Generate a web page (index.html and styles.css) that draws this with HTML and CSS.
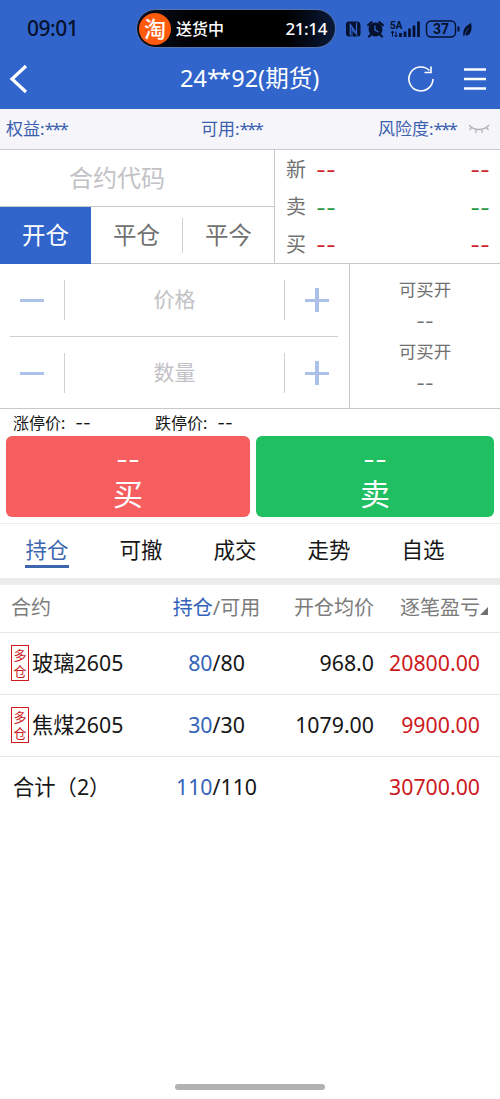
FILE: index.html
```html
<!DOCTYPE html>
<html lang="zh-CN">
<head>
    <meta charset="UTF-8">
    <meta name="viewport" content="width=device-width, initial-scale=1.0">
    <title>期货交易</title>
    <link rel="stylesheet" href="styles.css">
</head>
<body>
    <header class="top">
        <div class="status-bar">
            <span class="clock">09:01</span>
            <div class="island">
                <span class="island-logo">淘</span>
                <span class="island-text">送货中</span>
                <span class="island-time">21:14</span>
            </div>
            <svg class="status-icons" width="130" height="24" viewBox="0 0 130 24">
                <!-- nfc -->
                <path d="M4 4.500h7.500q4 0 4 4v7.500q0 3.500-2.500 3.500L6.500 8v11.500H4q-3 0-3-3V7.500q0-3 3-3z" fill="#06112e"/>
                <path d="M5.300 18.500V7.500l6.200 9V5.500" fill="none" stroke="#3165cc" stroke-width="1.300"/>
                <path d="M7.500 13.500l5 6h-5z" fill="#06112e"/>
                <!-- alarm -->
                <circle cx="30.500" cy="12.500" r="6.900" fill="#06112e"/>
                <path d="M23.200 8.200l3.500-3M37.800 8.200l-3.500-3M26 17.500l-2 2M35 17.500l2 2" stroke="#06112e" stroke-width="2.200" stroke-linecap="round"/>
                <path d="M30 8.500v4.500l3.500 2" fill="none" stroke="#3165cc" stroke-width="1.300"/>
                <!-- signal -->
                <text x="45" y="11.500" class="net-text">5A</text>
                <path d="M47.500 19.500v-5M46 16l1.500-2 1.500 2M51 14.500v5M49.500 18l1.500 2 1.500-2" fill="none" stroke="#06112e" stroke-width="1"/>
                <path d="M55.500 20v-4M60 20v-5.500M64.500 20v-8.500M69 20v-11.500M73.500 20v-15.500" stroke="#06112e" stroke-width="2.700"/>
                <!-- battery -->
                <rect x="81.500" y="4" width="29" height="16" rx="4.500" fill="none" stroke="#06112e" stroke-width="1.400"/>
                <text x="96" y="17" class="battery-text">37</text>
                <path d="M113.500 9.500v5" stroke="#06112e" stroke-width="2"/>
                <path d="M125.800 5.500c1.500 5 1 10-2.500 12.500-1 .6-2.300.5-3.200-.2L118.500 19.500c-.8-4 0-7.500 2.500-10 1.500-1.500 3.800-2 4.800-4z" fill="#06112e"/>
                <path d="M120 18c1-3 1.800-4.500 3.500-6.500" stroke="#3165cc" stroke-width=".7" fill="none"/>
            </svg>
        </div>
        <div class="nav-bar">
            <svg class="back" width="20" height="30" viewBox="0 0 20 30">
                <path d="M18 2L4 15l14 13" fill="none" stroke="#fff" stroke-width="3.200"/>
            </svg>
            <h1 class="title">24<span class="stars">**</span>92(期货)</h1>
            <svg class="refresh" width="28" height="28" viewBox="0 0 28 28">
                <path d="M25.900 14A12 12 0 1 1 22.400 5.500" fill="none" stroke="#fff" stroke-width="1.600"/>
                <path d="M24 1.500V7.500H17.500" fill="none" stroke="#fff" stroke-width="1.600"/>
            </svg>
            <svg class="menu" width="22" height="24" viewBox="0 0 22 24">
                <path d="M0 2.500h22M0 12h22M0 21.500h22" stroke="#fff" stroke-width="2.700"/>
            </svg>
        </div>
    </header>

    <div class="account">
        <span>权益:<span class="stars">***</span></span>
        <span>可用:<span class="stars">***</span></span>
        <span class="risk">风险度:<span class="stars">***</span>
            <svg width="22" height="12" viewBox="0 0 22 12">
                <path d="M1 2c5 6 15 6 20 0M4 4L1.500 7M8.500 6L7.500 10M13.500 6l1 4M18 4l2.500 3" fill="none" stroke="#b4b4ba" stroke-width="1.300"/>
            </svg>
        </span>
    </div>

    <section class="contract">
        <div class="contract-left">
            <div class="code">合约代码</div>
            <div class="modes">
                <span class="mode active">开仓</span>
                <span class="mode">平仓</span>
                <span class="mode">平今</span>
            </div>
        </div>
        <div class="quotes">
            <div class="quote red"><span class="label">新</span><span class="dash">--</span><span class="dash last">--</span></div>
            <div class="quote green"><span class="label">卖</span><span class="dash">--</span><span class="dash last">--</span></div>
            <div class="quote red"><span class="label">买</span><span class="dash">--</span><span class="dash last">--</span></div>
        </div>
    </section>

    <section class="order">
        <div class="inputs">
            <div class="stepper">
                <span class="step minus"></span>
                <span class="field">价格</span>
                <span class="step plus"></span>
            </div>
            <div class="stepper">
                <span class="step minus"></span>
                <span class="field">数量</span>
                <span class="step plus"></span>
            </div>
        </div>
        <div class="available">
            <span>可买开</span>
            <span class="dash">--</span>
            <span>可买开</span>
            <span class="dash">--</span>
        </div>
    </section>

    <div class="limits">
        <span>涨停价:<span class="dash">--</span></span>
        <span>跌停价:<span class="dash">--</span></span>
    </div>

    <div class="actions">
        <div class="action buy"><span class="dash">--</span><span class="name">买</span></div>
        <div class="action sell"><span class="dash">--</span><span class="name">卖</span></div>
    </div>

    <nav class="tabs">
        <span class="tab"><span class="current">持仓</span></span>
        <span class="tab">可撤</span>
        <span class="tab">成交</span>
        <span class="tab">走势</span>
        <span class="tab">自选</span>
    </nav>

    <section class="positions">
        <div class="row head">
            <span class="col-name">合约</span>
            <span class="col-qty"><b>持仓</b>/可用</span>
            <span class="col-price">开仓均价</span>
            <span class="col-profit">逐笔盈亏<i class="sort"></i></span>
        </div>
        <div class="row">
            <span class="col-name"><span class="badge"><span>多</span><span>仓</span></span>玻璃2605</span>
            <span class="col-qty"><b>80</b>/80</span>
            <span class="col-price">968.0</span>
            <span class="col-profit">20800.00</span>
        </div>
        <div class="row">
            <span class="col-name"><span class="badge"><span>多</span><span>仓</span></span>焦煤2605</span>
            <span class="col-qty"><b>30</b>/30</span>
            <span class="col-price">1079.00</span>
            <span class="col-profit">9900.00</span>
        </div>
        <div class="row total">
            <span class="col-name">合计（2）</span>
            <span class="col-qty"><b>110</b>/110</span>
            <span class="col-price"></span>
            <span class="col-profit">30700.00</span>
        </div>
    </section>

    <div class="home-bar"></div>
</body>
</html>
```
FILE: styles.css
```css
*{
    box-sizing: border-box;
}

body{
    margin: 0;
    width: 500px;
    height: 1099px;
    display: flex;
    flex-direction: column;
    overflow: hidden;
    background: #fff;
    color: #161616;
    font-family: "Noto Sans", "Noto Sans CJK SC", sans-serif;
    line-height: 1;
}

.top{
    height: 109px;
    background: #3165cc;
}

/* status bar */
.status-bar{
    display: flex;
    align-items: center;
    height: 57px;
    padding-left: 27px;
}

.clock{
    width: 109px;
    font-size: 21px;
    font-weight: 500;
    letter-spacing: -0.500px;
    color: #06112e;
}

.island{
    display: flex;
    align-items: center;
    width: 200px;
    height: 39px;
    padding: 0 8px 0 2px;
    border: 1px solid #5674ad;
    border-radius: 20px;
    background: linear-gradient(90deg, #0a1020, #000 30%, #000 75%, #0a1a38);
    color: #fff;
}

.island-logo{
    width: 32px;
    height: 32px;
    border-radius: 50%;
    background: #fd5a0c;
    font-size: 22px;
    font-weight: 500;
    line-height: 31px;
    text-align: center;
}

.island-text{
    margin-left: 5px;
    font-size: 16px;
    font-weight: 500;
}

.island-time{
    margin-left: auto;
    font-size: 17px;
    font-weight: 500;
    letter-spacing: -0.400px;
}

.status-icons{
    margin-left: 9px;
}

.net-text{
    font: 700 10px Roboto, sans-serif;
    fill: #06112e;
}

.battery-text{
    font: 700 14px Roboto, sans-serif;
    text-anchor: middle;
    fill: #06112e;
}

/* title */
.nav-bar{
    display: flex;
    align-items: center;
    height: 44px;
    padding: 0 14px 0 8px;
    color: #fff;
}

.title{
    width: 144px;
    margin: 0 83px 2px 152px;
    font-size: 23.500px;
    font-weight: 400;
    line-height: 30px;
    white-space: nowrap;
}

.title .stars{
    letter-spacing: -1.800px;
    margin-right: 2px;
}

.menu{
    margin-left: auto;
}

/* account line */
.account{
    display: grid;
    grid-template-columns: 195px 177px 1fr;
    align-items: center;
    height: 41px;
    padding-left: 6px;
    border-bottom: 1px solid #c9c9cf;
    background: #f5f5fa;
    color: #3a5fae;
    font-size: 17px;
    line-height: 24px;
}

.account .stars{
    letter-spacing: -1.900px;
}

.risk{
    display: flex;
    align-items: center;
}

.risk svg{
    margin-left: 12px;
}

/* contract and quotes */
.contract{
    display: flex;
    height: 114px;
    border-bottom: 1px solid #c8c8c8;
}

.contract-left{
    width: 275px;
    border-right: 1px solid #c8c8c8;
}

.code{
    height: 57px;
    padding-left: 69px;
    border-bottom: 1px solid #c8c8c8;
    color: #c2c2c6;
    font-size: 24px;
    line-height: 55px;
}

.modes{
    display: flex;
    height: 57px;
    color: #717171;
    font-size: 23.500px;
}

.mode{
    flex: 1;
    height: 57px;
    line-height: 57px;
    text-align: center;
}

.mode + .mode + .mode{
    height: 35px;
    margin-top: 11px;
    border-left: 1px solid #d0d0d0;
    line-height: 35px;
}

.mode.active{
    background: #3165cc;
    color: #fff;
}

.dash{
    font-family: Inter, sans-serif;
}

.quotes{
    flex: 1;
    padding: 1px 10px 0 11px;
}

.quote{
    display: flex;
    align-items: center;
    height: 37.500px;
    font-size: 21.500px;
}

.quote .label{
    width: 30px;
    color: #717171;
    font-size: 20px;
}

.quote .dash{
    padding-top: 2px;
}

.quote .last{
    margin-left: auto;
}

.red{
    color: #cf1f29;
}

.green{
    color: #26963c;
}

/* price and volume */
.order{
    display: flex;
    height: 145px;
    border-bottom: 1px solid #c8c8c8;
}

.inputs{
    width: 350px;
    padding: 0 11px 0 10px;
    border-right: 1px solid #c8c8c8;
}

.stepper{
    display: flex;
    align-items: center;
    height: 72px;
}

.stepper:first-child{
    height: 73px;
    border-bottom: 1px solid #d0d0d0;
}

.field{
    width: 221px;
    height: 40px;
    border: solid #d0d0d0;
    border-width: 0 1px;
    color: #c2c2c6;
    font-size: 21px;
    line-height: 38px;
    text-align: center;
}

.step{
    height: 24px;
    background: linear-gradient(#abc1e8, #abc1e8) center / 24px 3px no-repeat;
}

.minus{
    width: 54px;
    background-position: 10px center;
}

.plus{
    width: 24px;
    margin-left: 20px;
    background: linear-gradient(#abc1e8, #abc1e8) center / 24px 3px no-repeat,
                linear-gradient(#abc1e8, #abc1e8) center / 4px 24px no-repeat;
}

.available{
    flex: 1;
    display: flex;
    flex-direction: column;
    align-items: center;
    padding-top: 10px;
    color: #717171;
    font-size: 17.500px;
    line-height: 31px;
}

.available .dash{
    height: 31px;
    padding-top: 1px;
    font-size: 19px;
}

.limits{
    display: grid;
    grid-template-columns: 142px 1fr;
    height: 27px;
    padding-left: 13px;
    font-size: 16px;
    line-height: 28px;
}

.limits .dash{
    margin-left: 10px;
    font-size: 17px;
}

/* buy and sell */
.actions{
    display: grid;
    grid-template-columns: 244px 238px;
    gap: 6px;
    height: 88px;
    padding: 0 6px 6px;
    border-bottom: 1px solid #ededed;
}

.action{
    display: flex;
    flex-direction: column;
    align-items: center;
    border-radius: 6px;
    color: #fff;
}

.action .dash{
    font-size: 26px;
    line-height: 48px;
}

.action .name{
    font-size: 30px;
    line-height: 20px;
}

.buy{
    background: #f75e5f;
}

.sell{
    background: #20bf62;
}

/* tabs */
.tabs{
    display: flex;
    height: 61px;
    border-bottom: 7px solid #ececec;
    font-size: 21.500px;
}

.tab{
    width: 94px;
    line-height: 52px;
    text-align: center;
}

.current{
    display: inline-block;
    height: 44px;
    border-bottom: 3px solid #3d65b0;
    color: #3d65b0;
}

/* positions table */
.row{
    display: grid;
    grid-template-columns: 161px 89px 113px 106px;
    align-items: center;
    height: 62px;
    padding: 0 0 2px 11px;
    border-bottom: 1px solid #e6e6e6;
    font-size: 21.300px;
    line-height: 28px;
}

.row b{
    color: #3463ba;
    font-weight: 400;
}

.row.head{
    height: 48px;
    color: #7c7c7c;
    font-size: 20px;
}

.row.total{
    border-bottom: 0;
}

.total .col-name{
    padding-left: 2px;
}

.col-name{
    display: flex;
    align-items: center;
}

.col-qty{
    text-align: center;
    white-space: nowrap;
}

.col-price,
.col-profit{
    text-align: right;
}

.col-profit{
    color: #cd1920;
}

.head .col-profit{
    margin-right: -8px;
    color: #7c7c7c;
}

.badge{
    display: flex;
    flex-direction: column;
    justify-content: center;
    align-items: center;
    width: 18px;
    height: 36px;
    margin-right: 3px;
    border: 1px solid #cd1920;
    color: #cd1920;
    font-size: 13px;
    line-height: 16px;
}

.sort{
    display: inline-block;
    border-left: 8px solid transparent;
    border-bottom: 8px solid #717171;
}

.home-bar{
    width: 150px;
    height: 6px;
    margin: auto auto 9px;
    border-radius: 3px;
    background: #b2b2b2;
}
```
